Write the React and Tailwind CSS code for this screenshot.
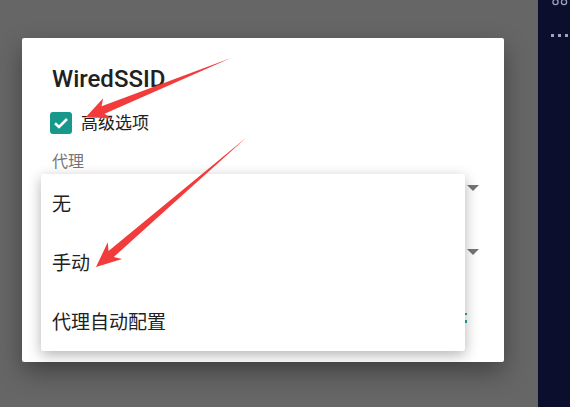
import React from "react";

function arrowPoints(T, P, L, H, s) {
  const dx = P[0] - T[0];
  const dy = P[1] - T[1];
  const len = Math.hypot(dx, dy);
  const ux = dx / len;
  const uy = dy / len;
  const nx = -uy;
  const ny = ux;
  const bx = P[0] - ux * L;
  const by = P[1] - uy * L;
  const nbx = P[0] - ux * (L * 0.8);
  const nby = P[1] - uy * (L * 0.8);
  const pts = [
    [T[0], T[1]],
    [nbx + nx * s, nby + ny * s],
    [bx + nx * H, by + ny * H],
    [P[0], P[1]],
    [bx - nx * H, by - ny * H],
    [nbx - nx * s, nby - ny * s],
  ];
  return pts.map((p) => p.join(",")).join(" ");
}

const cjk = { fontFamily: "Roboto, 'Noto Sans CJK SC', sans-serif" };

export default function App() {
  return (
    <div className="relative flex w-[570px] h-[407px] overflow-hidden" style={cjk}>
      <div className="flex-1 bg-[#666666] pl-[22px] pt-[38px]">
        <div className="relative w-[482px] h-[324px] bg-white rounded-[2px] shadow-[0_10px_24px_rgba(0,0,0,0.35)] pl-[30px] pr-[25px] pt-[27px]">
          <div className="text-[24px] leading-[28px] font-medium text-[#212121]">WiredSSID</div>
          <div className="flex items-center mt-[19px] h-[22px]">
            <div className="w-[22px] h-[22px] rounded-[3px] bg-[#16998a] flex items-center justify-center -ml-[2px]">
              <svg width="18" height="18" viewBox="0 0 18 18">
                <path d="M3 9.2 L7 13 L15 5" fill="none" stroke="white" strokeWidth="2.6" />
              </svg>
            </div>
            <span className="ml-[9px] text-[17px] leading-[22px] text-[#212121]">高级选项</span>
          </div>
          <div className="mt-[16px] text-[16px] leading-[24px] text-[#757575]">代理</div>
          <div className="flex justify-end items-center h-[28px]">
            <svg width="12" height="6" viewBox="0 0 12 6"><path d="M0 0 H12 L6 6 Z" fill="#757575" /></svg>
          </div>
          <div className="flex justify-end items-center h-[28px] mt-[36px]">
            <svg width="12" height="6" viewBox="0 0 12 6"><path d="M0 0 H12 L6 6 Z" fill="#757575" /></svg>
          </div>
          <div className="flex justify-end mt-[47px] pr-[12px]">
            <div className="flex flex-col gap-[5px]">
              <div className="w-[2px] h-[2px] bg-[#26a69a]" />
              <div className="w-[2px] h-[3px] bg-[#26a69a]" />
            </div>
          </div>
          <div className="absolute left-[19px] top-[136px] w-[424px] h-[177px] bg-white rounded-[2px] shadow-[0_4px_14px_rgba(0,0,0,0.3)] flex flex-col">
            <div className="h-[59px] flex items-center pl-[11px] pt-[4px] text-[19px] text-[#212121]">无</div>
            <div className="h-[59px] flex items-center pl-[11px] pt-[4px] text-[19px] text-[#212121]">手动</div>
            <div className="h-[59px] flex items-center pl-[11px] pt-[3px] text-[19px] text-[#212121]">代理自动配置</div>
          </div>
        </div>
      </div>
      <div className="w-[32px] bg-[#0c0e2e] relative">
        <svg className="absolute left-0 top-0" width="32" height="40" viewBox="0 0 32 40">
          <circle cx="17.5" cy="2" r="2.6" fill="none" stroke="#9ea3b8" strokeWidth="1.3" />
          <circle cx="26" cy="2" r="2.6" fill="none" stroke="#9ea3b8" strokeWidth="1.3" />
          <rect x="13" y="34" width="3" height="3" fill="#9ea3b8" />
          <rect x="20" y="34" width="3" height="3" fill="#9ea3b8" />
          <rect x="27" y="34" width="3" height="3" fill="#9ea3b8" />
        </svg>
      </div>
      <svg className="absolute left-0 top-0 pointer-events-none" width="570" height="407" viewBox="0 0 570 407">
        <polygon points={arrowPoints([231, 58], [86, 117], 23, 11, 4)} fill="#f23c3c" />
        <polygon points={arrowPoints([247, 137], [96, 267], 25, 11, 4)} fill="#f23c3c" />
      </svg>
    </div>
  );
}
